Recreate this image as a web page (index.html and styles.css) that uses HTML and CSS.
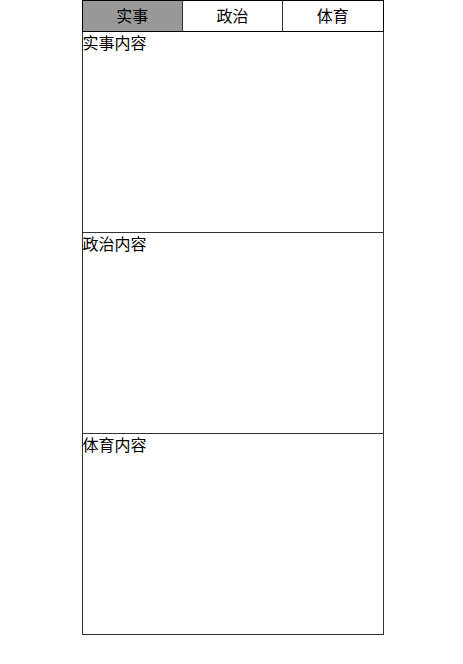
FILE: index.html
```html
<!DOCTYPE html>
<html lang="zh-CN">
<head>
    <meta charset="UTF-8">
    <meta name="viewport" content="width=device-width, initial-scale=1.0">
    <title>选项卡</title>
    <link rel="stylesheet" href="styles.css">
</head>
<body>
    <div class="box">
        <ul class="tab">
            <li><button type="button" class="active">实事</button></li>
            <li><button type="button">政治</button></li>
            <li><button type="button">体育</button></li>
        </ul>
        <div class="content">
            <div class="item">实事内容</div>
            <div class="item">政治内容</div>
            <div class="item">体育内容</div>
        </div>
    </div>
</body>
</html>
```

FILE: styles.css
```css
* {
    margin: 0;
    padding: 0;
    box-sizing: border-box;
}
body {
    font-family: "Liberation Sans", "Noto Sans CJK SC", sans-serif;
    font-size: 16px;
    color: #000;
    background-color: #fff;
}
.box {
    max-width: 300px;
    margin: 0 auto;
}
.tab, .content {
    margin-right: -2px;
}
.tab {
    display: flex;
    list-style: none;
    border: 1px solid #000;
}
.tab li {
    flex: 1;
}
.tab li + li {
    border-left: 1px solid #333;
}
.tab button {
    display: block;
    width: 100%;
    padding-top: 2px;
    border: none;
    background-color: #fff;
    font: inherit;
    line-height: 28px;
    color: inherit;
    cursor: pointer;
}
.tab .active {
    background-color: #999;
}
.item {
    min-height: 201px;
    border: 1px solid #333;
    border-top: none;
    line-height: 24px;
}
```
